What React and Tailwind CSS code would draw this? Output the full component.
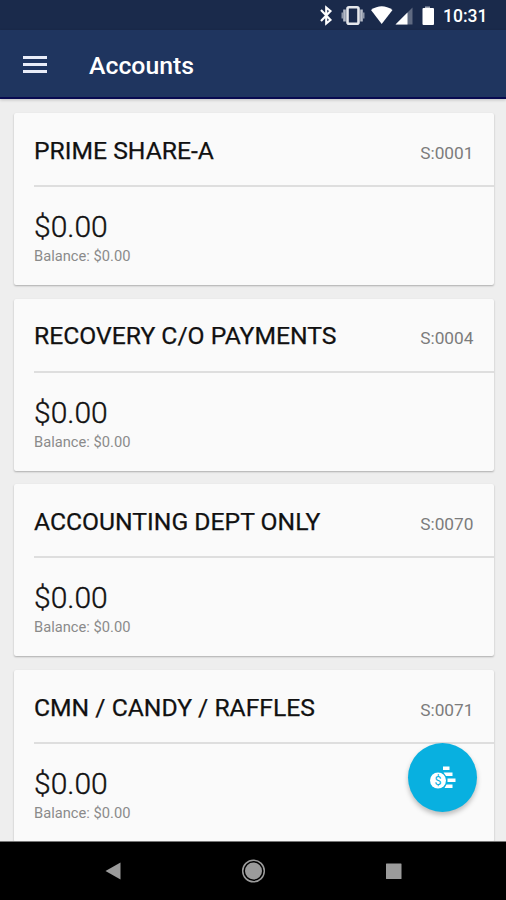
import React from 'react';

const accounts = [
  { id: 'S:0001', name: 'PRIME SHARE-A', available: '$0.00', balance: '$0.00' },
  { id: 'S:0004', name: 'RECOVERY C/O PAYMENTS', available: '$0.00', balance: '$0.00' },
  { id: 'S:0070', name: 'ACCOUNTING DEPT ONLY', available: '$0.00', balance: '$0.00' },
  { id: 'S:0071', name: 'CMN / CANDY / RAFFLES', available: '$0.00', balance: '$0.00' },
];

function StatusBar() {
  return (
    <div className="flex h-[30px] shrink-0 items-center justify-end bg-[#1a2a4b] pr-[19px] text-white">
      <svg width="118" height="30" viewBox="0 0 118 30" fill="currentColor">
        {/* Bluetooth */}
        <path
          d="M3 10 L12.5 20 L8.2 23.5 V7.5 L12.5 11 L3 21"
          fill="none"
          stroke="currentColor"
          strokeWidth="2.1"
        />
        {/* Vibrate */}
        <rect x="29.5" y="7.3" width="11" height="16.4" rx="1.5" fill="none" stroke="#e6e8ec" strokeWidth="2.6" />
        <path d="M26.5 9.5v12M43.5 9.5v12" stroke="#b5bbc7" strokeWidth="2.6" />
        <path d="M24.3 12.5v6M45.7 12.5v6" stroke="#8f98aa" strokeWidth="1.6" />
        {/* Wifi */}
        <path d="M53 10 Q63.7 2.5 74.5 10 L63.7 24 Z" />
        {/* Signal */}
        <path d="M94.5 7.5 V24.5 H77.5 Z" opacity=".3" />
        <path d="M89.5 12.5 V24.5 H77.5 Z" />
        {/* Battery */}
        <path d="M107 6.5h5v2h-5z" opacity=".6" />
        <rect x="104.5" y="8" width="11.5" height="17" rx="1" />
      </svg>
      <span className="ml-[7px] w-[44px] pt-[2px] text-[17.5px] leading-[28px] font-medium whitespace-nowrap">10:31</span>
    </div>
  );
}

function AppBar() {
  return (
    <header className="z-10 flex h-[69px] shrink-0 items-center border-b-2 border-[#080a50] bg-[#1f355f] pl-[23px] text-white shadow-[0_1px_3px_rgba(0,0,0,0.2)]">
      <button aria-label="Menu" className="flex w-6 flex-col gap-[4px] pt-[2px]">
        <span className="h-[3px] bg-[#e9edf8]" />
        <span className="h-[3px] bg-[#e9edf8]" />
        <span className="h-[3px] bg-[#e9edf8]" />
      </button>
      <h1 className="ml-[42px] pt-[5px] text-[24.8px] font-medium">Accounts</h1>
    </header>
  );
}

function AccountCard({ account }) {
  return (
    <section className="h-[172px] shrink-0 rounded-[2px] bg-[#fafafa] pl-5 shadow-[0_1px_2px_rgba(0,0,0,0.28)]">
      <div className="flex h-[74px] items-center justify-between border-b-2 border-[#dedede] pr-5">
        <h2 className="pt-[2.6px] text-[24.7px] text-[#111] [-webkit-text-stroke:0.25px_#111]">{account.name}</h2>
        <span className="pt-[9px] text-[17.3px] text-[#7c7c7c]">{account.id}</span>
      </div>
      <div className="pt-[22px]">
        <p className="text-[30px] leading-9 font-light text-[#111] [-webkit-text-stroke:0.35px_#111]">{account.available}</p>
        <p className="text-[14.7px] leading-[22px] text-[#8a8a8a]">Balance: {account.balance}</p>
      </div>
    </section>
  );
}

function NavBar() {
  return (
    <nav className="z-10 flex h-[59px] shrink-0 justify-center border-t border-[#777] bg-black">
      <svg width="506" height="58" viewBox="0 0 506 58" fill="#9b9b9b">
        <path d="M105.5 29 L120.5 20.5 V37.5 Z" />
        <circle cx="253.5" cy="29" r="8.5" />
        <circle cx="253.5" cy="29" r="10.8" fill="none" stroke="#9b9b9b" strokeWidth="1.5" />
        <rect x="386" y="21.5" width="15.5" height="15.5" rx="0.5" />
      </svg>
    </nav>
  );
}

export default function App() {
  return (
    <div className="relative flex h-[900px] w-[506px] flex-col overflow-hidden bg-[#eeeeee] font-['Roboto',sans-serif]">
      <StatusBar />
      <AppBar />
      <main className="flex min-h-0 flex-1 flex-col gap-[13.7px] overflow-hidden pt-[14px] pr-[12.5px] pl-[14px]">
        {accounts.map((account) => (
          <AccountCard key={account.id} account={account} />
        ))}
      </main>
      <NavBar />

      {/* Transfer button */}
      <button
        aria-label="Transfer"
        className="absolute top-[743px] left-[408px] z-20 h-[69px] w-[69px] rounded-full bg-[#08b0e0] shadow-[0_3px_5px_rgba(0,0,0,0.25)]"
      >
        <svg width="69" height="69" viewBox="0 0 69 69" fill="#fff">
          <path d="M35 23.5h6.5v3.5h-6.5zM35.5 29.5h9v3.5h-6.5zM39.5 35.5h8v3.5h-8zM38.5 41.5h6v3.5h-8z" />
          <circle cx="30" cy="37.5" r="8" />
          <text x="30" y="42" fill="#08b0e0" fontSize="12.5" textAnchor="middle">
            $
          </text>
        </svg>
      </button>
    </div>
  );
}
